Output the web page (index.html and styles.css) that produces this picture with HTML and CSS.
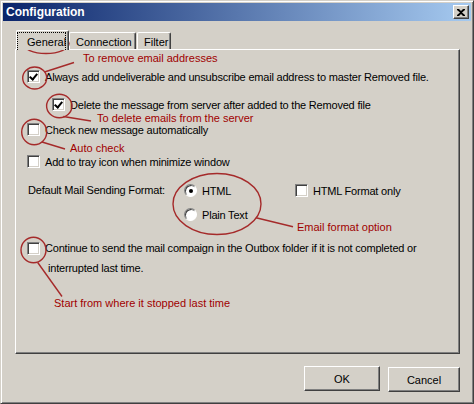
FILE: index.html
```html
<!DOCTYPE html>
<html lang="en">

<head>
    <meta charset="UTF-8">
    <title>Configuration</title>
    <link rel="stylesheet" href="styles.css">
</head>

<body>
    <div class="window">
        <div class="titlebar">
            <span class="title">Configuration</span>
            <span class="close">
                <svg width="8" height="7" viewBox="0 0 8 7">
                    <path d="M0 0h2l2 2 2-2h2v1L5 3.5 8 6v1H6L4 5 2 7H0V6l3-2.5L0 1z" fill="#000"/>
                </svg>
            </span>
        </div>

        <div class="content">
            <div class="tabs">
                <div class="tab active"><span class="focus">General</span></div>
                <div class="tab">Connection</div>
                <div class="tab">Filter</div>
            </div>

            <div class="panel">
                <div class="opt row1">
                    <span class="check on"></span>
                    <span>Always add undeliverable and unsubscribe email address to master Removed file.</span>
                </div>
                <div class="opt row2">
                    <span class="check on"></span>
                    <span>Delete the message from server after added to the Removed file</span>
                </div>
                <div class="opt row3">
                    <span class="check"></span>
                    <span>Check new message automatically</span>
                </div>
                <div class="opt row4">
                    <span class="check"></span>
                    <span>Add to tray icon when minimize window</span>
                </div>

                <div class="format">
                    <span class="format-label">Default Mail Sending Format:</span>
                    <div class="radios">
                        <div class="opt">
                            <span class="radio on"></span>
                            <span>HTML</span>
                        </div>
                        <div class="opt plain">
                            <span class="radio"></span>
                            <span>Plain Text</span>
                        </div>
                    </div>
                    <div class="opt html-only">
                        <span class="check"></span>
                        <span>HTML Format only</span>
                    </div>
                </div>

                <div class="resume">
                    <span class="check"></span>
                    <div class="resume-text">
                        <span class="line">Continue to send the mail compaign in the Outbox folder if it is not completed or</span>
                        <span class="line second">interrupted last time.</span>
                    </div>
                </div>
            </div>

            <div class="buttons">
                <button class="btn ok">OK</button>
                <button class="btn cancel">Cancel</button>
            </div>
        </div>

        <!-- annotations drawn on top of the dialog -->
        <div class="notes">
            <svg width="474" height="404" viewBox="0 0 474 404">
                <g fill="none" stroke="#a52a2a" stroke-width="1.4">
                    <ellipse cx="45" cy="42.5" rx="23" ry="10"/>
                    <ellipse cx="33.7" cy="77" rx="12" ry="11"/>
                    <line x1="43.5" y1="71" x2="73" y2="61.5"/>
                    <ellipse cx="58.3" cy="105" rx="12.7" ry="11.7"/>
                    <line x1="62.3" y1="115.5" x2="90" y2="120"/>
                    <ellipse cx="33.2" cy="131" rx="12.5" ry="12.8"/>
                    <line x1="41" y1="141" x2="64" y2="148"/>
                    <ellipse cx="216" cy="203" rx="44" ry="30.5"/>
                    <line x1="255" y1="216.7" x2="292" y2="225.7"/>
                    <ellipse cx="32.5" cy="249" rx="12.5" ry="12.8"/>
                    <line x1="36.7" y1="261.5" x2="61" y2="295.5"/>
                </g>
            </svg>
            <span class="note n1">To remove email addresses</span>
            <span class="note n2">To delete emails from the server</span>
            <span class="note n3">Auto check</span>
            <span class="note n4">Email format option</span>
            <span class="note n5">Start from where it stopped last time</span>
        </div>
    </div>
</body>

</html>
```

FILE: styles.css
```css
body {
    margin: 0;
    padding: 0;
    background-color: #d4d0c8;
    font-family: "Liberation Sans", Arial, sans-serif;
    font-size: 11px;
    color: #000;
}

.window {
    position: relative;
    width: 474px;
    height: 404px;
    box-sizing: border-box;
    background-color: #d4d0c8;
    border: 1px solid;
    border-color: #d4d0c8 #404040 #404040 #d4d0c8;
    box-shadow: inset 1px 1px #fff, inset -1px -1px #808080;
    padding: 2px;
}

.titlebar {
    display: flex;
    align-items: center;
    justify-content: space-between;
    height: 18px;
    padding: 0 2px 0 3px;
    background: linear-gradient(to right, #0a246a, #a6caf0);
}

.title {
    color: #fff;
    font-weight: bold;
    font-size: 12px;
}

.close {
    display: flex;
    align-items: center;
    justify-content: center;
    width: 16px;
    height: 14px;
    box-sizing: border-box;
    background-color: #d4d0c8;
    border: 1px solid;
    border-color: #fff #404040 #404040 #fff;
    box-shadow: inset -1px -1px #808080;
}

.content {
    padding: 9px 11px 0 12px;
}

/* tabs */
.tabs {
    display: flex;
    align-items: flex-end;
    height: 19px;
    padding-left: 1px;
}

.tab {
    position: relative;
    box-sizing: border-box;
    height: 17px;
    padding: 2px 6px 0;
    line-height: 15px;
    border: 1px solid;
    border-bottom: none;
    border-color: #fff #404040 #404040 #fff;
    border-radius: 2px 2px 0 0;
    box-shadow: inset -1px 0 #808080;
}

.tab:nth-child(2) {
    width: 67px;
    text-align: center;
}

.tab:nth-child(3) {
    width: 34px;
    margin-left: 1px;
    text-align: center;
}

.tab.active {
    z-index: 1;
    width: 53px;
    height: 20px;
    margin-bottom: -1px;
    padding: 1px 2px 0 0;
    background-color: #d4d0c8;
}

.focus {
    display: block;
    box-sizing: border-box;
    height: 18px;
    padding-left: 9px;
    line-height: 18px;
    border: 1px dotted #000;
    border-bottom: none;
}

.panel {
    box-sizing: border-box;
    width: 445px;
    height: 305px;
    padding: 20px 0 0 11px;
    border: 1px solid;
    border-color: #fff #404040 #404040 #fff;
    box-shadow: inset -1px -1px #808080;
    letter-spacing: -0.2px;
}

/* checkboxes and radios */
.opt {
    display: flex;
    align-items: center;
    gap: 5px;
    height: 13px;
    white-space: nowrap;
}

.row2 {
    margin: 15px 0 0 25px;
}

.row3 {
    margin-top: 12px;
}

.row4 {
    margin-top: 19px;
}

.check {
    flex: none;
    position: relative;
    width: 13px;
    height: 13px;
    box-sizing: border-box;
    background-color: #fff;
    border: 1px solid;
    border-color: #808080 #fff #fff #808080;
    box-shadow: inset 1px 1px #404040, inset -1px -1px #d4d0c8;
}

.check.on::after {
    content: "";
    position: absolute;
    left: 3px;
    top: 1px;
    width: 3px;
    height: 6px;
    border: solid #000;
    border-width: 0 2px 2px 0;
    transform: rotate(40deg);
    transform-origin: 50% 50%;
}

.radio {
    flex: none;
    position: relative;
    width: 13px;
    height: 13px;
    box-sizing: border-box;
    border-radius: 50%;
    background-color: #fff;
    border: 1px solid;
    border-color: #808080 #fff #fff #808080;
    box-shadow: inset 1px 1px #404040;
}

.radio.on::after {
    content: "";
    position: absolute;
    left: 3.5px;
    top: 3.5px;
    width: 4px;
    height: 4px;
    border-radius: 50%;
    background-color: #000;
}

.format {
    display: flex;
    align-items: flex-start;
    margin-top: 16px;
}

.format-label {
    width: 157px;
    line-height: 13px;
    padding-left: 1px;
    box-sizing: border-box;
}

.radios {
    width: 111px;
}

.plain {
    margin-top: 11px;
}

.html-only {
    margin-top: 0;
}

.resume {
    display: flex;
    gap: 5px;
    margin-top: 21px;
}

.resume-text {
    display: flex;
    flex-direction: column;
}

.line {
    line-height: 13px;
}

.line.second {
    margin: 7px 0 0 3px;
}

/* dialog buttons */
.buttons {
    display: flex;
    justify-content: flex-end;
    gap: 8px;
    width: 445px;
    margin-top: 12px;
}

button.btn {
    box-sizing: border-box;
    height: 25px;
    padding: 0;
    font-family: "Liberation Sans", Arial, sans-serif;
    font-size: 11px;
    color: #000;
    background-color: #d4d0c8;
    border: 1px solid;
    border-color: #fff #404040 #404040 #fff;
    box-shadow: inset -1px -1px #808080;
}

.ok {
    width: 76px;
}

.cancel {
    width: 72px;
    margin-top: 1px;
}

/* annotation layer */
.notes {
    position: absolute;
    left: 0;
    top: 0;
    width: 474px;
    height: 404px;
    pointer-events: none;
}

.notes svg {
    position: absolute;
    left: 0;
    top: 0;
}

.note {
    position: absolute;
    color: #a00000;
    font-size: 11px;
    line-height: 11px;
    white-space: nowrap;
}

.n1 {
    left: 82px;
    top: 52px;
}

.n2 {
    left: 96px;
    top: 112px;
}

.n3 {
    left: 69px;
    top: 142px;
}

.n4 {
    left: 296px;
    top: 221px;
}

.n5 {
    left: 53px;
    top: 297px;
}
```
